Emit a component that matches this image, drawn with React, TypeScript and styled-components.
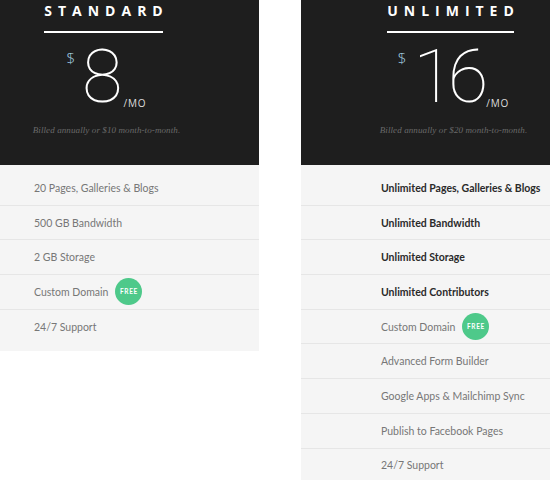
import React from "react";
import styled, { createGlobalStyle } from "styled-components";

const Global = createGlobalStyle`
  html, body { margin: 0; padding: 0; background: #ffffff; overflow: hidden; }
  body { font-family: Lato, "Liberation Sans", sans-serif; }
`;

const Page = styled.div`
  display: flex;
  align-items: flex-start;
  gap: 42px;
  margin-left: -46px;
`;

const Column = styled.section`
  width: 305px;
  flex: none;
  background: #f5f5f5;
`;

const Header = styled.header`
  background: #1e1e1e;
  height: 165px;
  box-sizing: border-box;
  padding-top: 1px;
  display: flex;
  flex-direction: column;
  align-items: center;
`;

const Title = styled.h2`
  margin: 0;
  display: flex;
  flex-direction: column;
  font-family: "Open Sans", "Liberation Sans", sans-serif;
  font-weight: 700;
  font-size: 14px;
  line-height: 20px;
  letter-spacing: 6px;
  color: #ffffff;

  &::after {
    content: "";
    display: block;
    height: 2px;
    margin-top: 10px;
    margin-right: 6px;
    background: #ffffff;
  }
`;

const PriceRow = styled.div`
  display: flex;
  align-items: flex-start;
  margin-top: 6px;
  height: 76px;
  color: #ffffff;
`;

const Currency = styled.span`
  font-family: "Open Sans", "Liberation Sans", sans-serif;
  font-size: 15px;
  font-weight: 300;
  color: #a8d4e4;
  margin-top: 9px;
  margin-right: 7px;
`;

const Amount = styled.span<{ $tight?: boolean }>`
  font-family: Roboto, "Liberation Sans", sans-serif;
  font-weight: 100;
  font-size: 74px;
  line-height: 76px;
  letter-spacing: ${(p) => (p.$tight ? "-6px" : "-3px")};
`;

const Per = styled.span`
  align-self: flex-end;
  font-family: "Open Sans", "Liberation Sans", sans-serif;
  font-size: 10px;
  font-weight: 400;
  letter-spacing: 0.8px;
  color: #dddddd;
  margin-left: 4px;
  margin-bottom: 5px;
`;

const Billed = styled.p`
  margin: 10px 0 0 0;
  font-family: "Liberation Serif", "DejaVu Serif", serif;
  font-style: italic;
  font-size: 9px;
  letter-spacing: 0.1px;
  color: #6a6a6a;
`;

const List = styled.ul`
  list-style: none;
  margin: 0;
  padding: 6px 0 7px 0;
`;

const Item = styled.li<{ $last?: boolean; $strong?: boolean }>`
  display: flex;
  align-items: center;
  height: 33.7px;
  padding-left: 80px;
  border-bottom: 1px solid ${(p) => (p.$last ? "transparent" : "#e6e6e6")};
  font-family: Lato, "Liberation Sans", sans-serif;
  font-size: 10.5px;
  letter-spacing: 0;
  color: ${(p) => (p.$strong ? "#2a2a2a" : "#777777")};
  font-weight: ${(p) => (p.$strong ? 700 : 400)};
`;

const Badge = styled.span`
  display: inline-flex;
  align-items: center;
  justify-content: center;
  width: 27px;
  height: 27px;
  border-radius: 50%;
  background: #4ec98a;
  color: #ffffff;
  font-size: 6.5px;
  font-weight: 700;
  letter-spacing: 0.6px;
  margin-left: 7px;
`;

type Feature = { text: string; strong?: boolean; free?: boolean };

const plans: { name: string; price: string; monthly: string; features: Feature[] }[] = [
  {
    name: "STANDARD",
    price: "8",
    monthly: "$10",
    features: [
      { text: "20 Pages, Galleries & Blogs" },
      { text: "500 GB Bandwidth" },
      { text: "2 GB Storage" },
      { text: "Custom Domain", free: true },
      { text: "24/7 Support" },
    ],
  },
  {
    name: "UNLIMITED",
    price: "16",
    monthly: "$20",
    features: [
      { text: "Unlimited Pages, Galleries & Blogs", strong: true },
      { text: "Unlimited Bandwidth", strong: true },
      { text: "Unlimited Storage", strong: true },
      { text: "Unlimited Contributors", strong: true },
      { text: "Custom Domain", free: true },
      { text: "Advanced Form Builder" },
      { text: "Google Apps & Mailchimp Sync" },
      { text: "Publish to Facebook Pages" },
      { text: "24/7 Support" },
    ],
  },
];

export default function App() {
  return (
    <>
      <Global />
      <Page>
        {plans.map((plan) => (
          <Column key={plan.name}>
            <Header>
              <Title>{plan.name}</Title>
              <PriceRow>
                <Currency>$</Currency>
                <Amount $tight={plan.price.length > 1}>{plan.price}</Amount>
                <Per>/MO</Per>
              </PriceRow>
              <Billed>Billed annually or {plan.monthly} month-to-month.</Billed>
            </Header>
            <List>
              {plan.features.map((f, i) => (
                <Item key={f.text} $strong={f.strong} $last={i === plan.features.length - 1}>
                  {f.text}
                  {f.free && <Badge>FREE</Badge>}
                </Item>
              ))}
            </List>
          </Column>
        ))}
      </Page>
    </>
  );
}
